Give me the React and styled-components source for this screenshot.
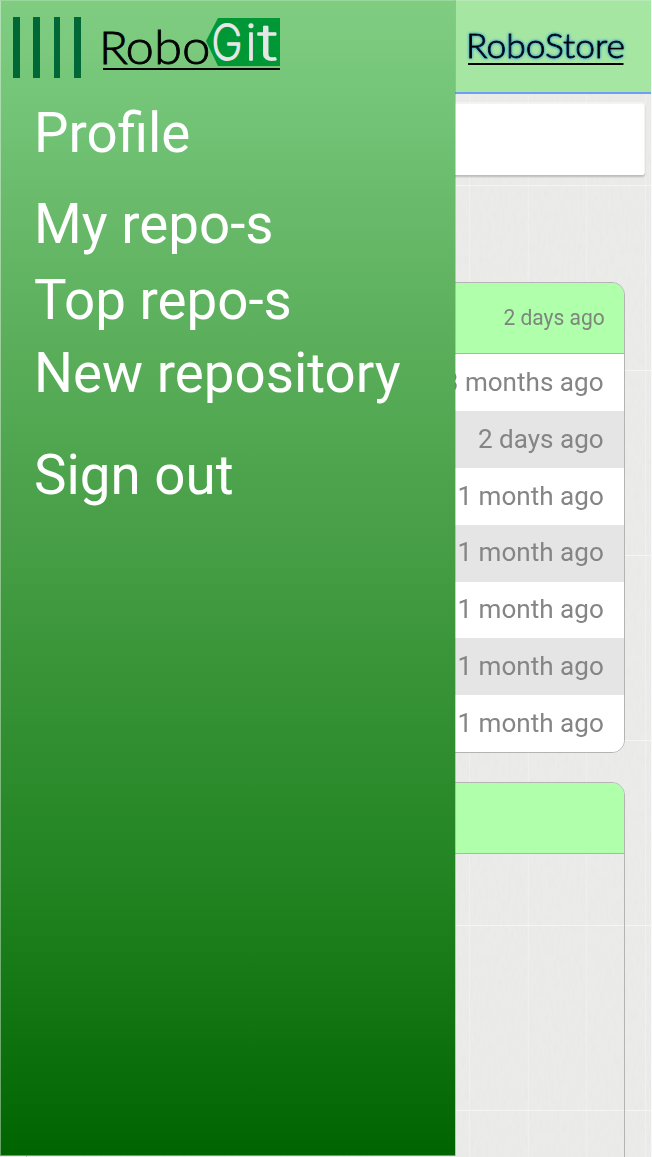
import React from "react";
import styled, { createGlobalStyle } from "styled-components";

const GlobalStyle = createGlobalStyle`
  *, *::before, *::after { box-sizing: border-box; }
  body { margin: 0; background: #f4f4f3; font-family: Roboto, sans-serif; }
`;

const Screen = styled.div`
  position: relative;
  width: 652px;
  height: 1157px;
  overflow: hidden;
  background: #ebebea;
`;

const Texture = styled.svg`
  position: absolute;
  inset: 0;
  width: 100%;
  height: 100%;
`;

const Page = styled.div`
  position: relative;
  width: 652px;
  height: 1157px;
  display: flex;
  flex-direction: column;
  border-right: 1px solid rgba(255, 255, 255, 0.7);
`;

const TopBar = styled.header`
  display: flex;
  flex: none;
  justify-content: flex-end;
  height: 94px;
  background: #a5e6a3;
  border-top: 1px solid #b7eab6;
  border-bottom: 2px solid #6d9ff2;
`;

const StoreLogo = styled.svg`
  width: 196px;
  height: 91px;
  overflow: visible;
  font-family: Lato, sans-serif;
`;

const SearchBox = styled.div`
  flex: none;
  height: 71px;
  margin: 10px 7px 0 6px;
  border-radius: 2px;
  background: #fff;
  box-shadow: 0 -1px 0 1px #f3f3f3, 0 1px 2px 1px #bcbcbc;
`;

const Cards = styled.main`
  display: flex;
  flex-direction: column;
  gap: 29px;
  margin: 107px 26px 0 26px;
`;

const Card = styled.section`
  flex: none;
  height: ${({ $height }) => $height}px;
  overflow: hidden;
  border: 1px solid #b4b4b4;
  border-radius: 13px;
`;

const CardHeader = styled.div`
  display: flex;
  align-items: center;
  justify-content: flex-end;
  height: 71px;
  padding: 0 19px 1px 0;
  background: #b0ffab;
  border-bottom: 1px solid #a9b9a8;
  color: #7d857d;
  font-size: 21.5px;
`;

const Row = styled.div`
  display: flex;
  align-items: center;
  justify-content: flex-end;
  height: 56.9px;
  padding: 0 20.5px 1.4px 0;
  background: ${({ $shaded }) => ($shaded ? "#e5e5e5" : "#fff")};
  color: #858585;
  font-size: 26.7px;
  white-space: nowrap;
`;

const Age = styled.span`
  transform: scaleX(0.977);
  transform-origin: right center;
`;

const Drawer = styled.aside`
  position: absolute;
  left: 0;
  top: 0;
  width: 455px;
  height: 1156px;
  background: linear-gradient(#80cd82 0, #74c578 100px, #5eb15e 310px, #489f47 530px, #1f821f 900px, #006400 1155px);
  border: solid rgba(255, 255, 255, 0.4);
  border-width: 1px 0 1px 1px;
  border-top-color: rgba(255, 255, 255, 0.2);
  background-origin: border-box;
  box-shadow: 1px 0 0 rgba(70, 150, 70, 0.35);
`;

const DrawerHeader = styled.div`
  display: flex;
  height: 93px;
  padding: 16px 0 0 12px;
`;

const MenuBars = styled.div`
  display: flex;
  gap: 13.7px;
  width: 90px;
  height: 61px;
`;

const Bar = styled.span`
  width: 6.7px;
  background: #006837;
`;

const GitLogo = styled.svg`
  width: 180px;
  height: 60px;
  overflow: visible;
  font-family: Lato, sans-serif;
`;

const Nav = styled.nav`
  display: flex;
  flex-direction: column;
  padding-left: 33px;
`;

const NavLink = styled.a`
  height: 66px;
  margin-top: ${({ $gap }) => $gap}px;
  color: #fff;
  font-size: 56px;
  line-height: 66px;
  white-space: nowrap;
  transform: scaleX(0.977);
  transform-origin: left center;
`;

const dates = [
  "3 months ago",
  "2 days ago",
  "1 month ago",
  "1 month ago",
  "1 month ago",
  "1 month ago",
  "1 month ago",
];

const links = [
  { label: "Profile", gap: 6 },
  { label: "My repo-s", gap: 25 },
  { label: "Top repo-s", gap: 10 },
  { label: "New repository", gap: 7 },
  { label: "Sign out", gap: 36 },
];

function PaperTexture() {
  return (
    <Texture aria-hidden="true">
      <filter id="paper">
        <feTurbulence type="fractalNoise" baseFrequency="0.35 0.09" numOctaves="2" />
        <feColorMatrix values="0 0 0 0 .5  0 0 0 0 .5  0 0 0 0 .5  .12 0 0 0 -.05" />
      </filter>
      <rect width="652" height="1157" filter="url(#paper)" />
      {[469.5, 528.3, 586.7, 645.5].map((x) => (
        <line key={x} x1={x} x2={x} y1="0" y2="1157" stroke="#f0f0f0" />
      ))}
      {[185.5, 370.5, 555.5, 740.5, 925.5, 1110.5].map((y) => (
        <line key={y} x1="0" x2="652" y1={y} y2={y} stroke="#f5f5f5" />
      ))}
    </Texture>
  );
}

export default function App() {
  return (
    <>
      <GlobalStyle />
      <Screen>
        <PaperTexture />
        <Page>
          <TopBar>
            <StoreLogo viewBox="455 1 196 91">
              <filter id="glow" x="-10%" y="-40%" width="120%" height="180%">
                <feDropShadow dx="0" dy="0" stdDeviation="1.7" floodColor="#1788dc" floodOpacity="1" />
              </filter>
              <text
                x="466"
                y="58"
                fontSize="34"
                fontWeight="300"
                stroke="#000"
                strokeWidth=".9"
                textLength="159"
                lengthAdjust="spacingAndGlyphs"
                filter="url(#glow)"
              >
                RoboStore
              </text>
              <path d="M468 64h155.5" stroke="#000" strokeWidth="2" />
            </StoreLogo>
          </TopBar>
          <SearchBox />
          <Cards>
            <Card $height={471}>
              <CardHeader><Age>2 days ago</Age></CardHeader>
              {dates.map((date, i) => (
                <Row key={i} $shaded={i % 2 === 1}><Age>{date}</Age></Row>
              ))}
            </Card>
            <Card $height={420}>
              <CardHeader />
            </Card>
          </Cards>
        </Page>
        <Drawer>
          <DrawerHeader>
            <MenuBars>
              <Bar /><Bar /><Bar /><Bar />
            </MenuBars>
            <GitLogo viewBox="103 17 180 60">
              <path d="M218 18H280V66H218L206 41Z" fill="#009837" />
              <text y="63.5" fontWeight="300" stroke="#000" strokeWidth=".8">
                <tspan x="99" fontSize="45.5" textLength="29" lengthAdjust="spacingAndGlyphs">R</tspan>
                <tspan x="125.5" fontSize="48" textLength="85" lengthAdjust="spacingAndGlyphs">obo</tspan>
              </text>
              <text
                y="60.3"
                fontFamily="Inter, sans-serif"
                fontSize="49"
                fontWeight="200"
                fill="#e6e6e6"
                stroke="#e6e6e6"
                strokeWidth="1.6"
                strokeLinejoin="round"
              >
                <tspan x="211.5" textLength="31" lengthAdjust="spacingAndGlyphs">G</tspan>
                <tspan x="245.5">i</tspan>
                <tspan x="258" textLength="19" lengthAdjust="spacingAndGlyphs">t</tspan>
              </text>
              <path d="M103 69H280" stroke="#000" strokeWidth="2" />
            </GitLogo>
          </DrawerHeader>
          <Nav>
            {links.map((link) => (
              <NavLink key={link.label} $gap={link.gap}>{link.label}</NavLink>
            ))}
          </Nav>
        </Drawer>
      </Screen>
    </>
  );
}
